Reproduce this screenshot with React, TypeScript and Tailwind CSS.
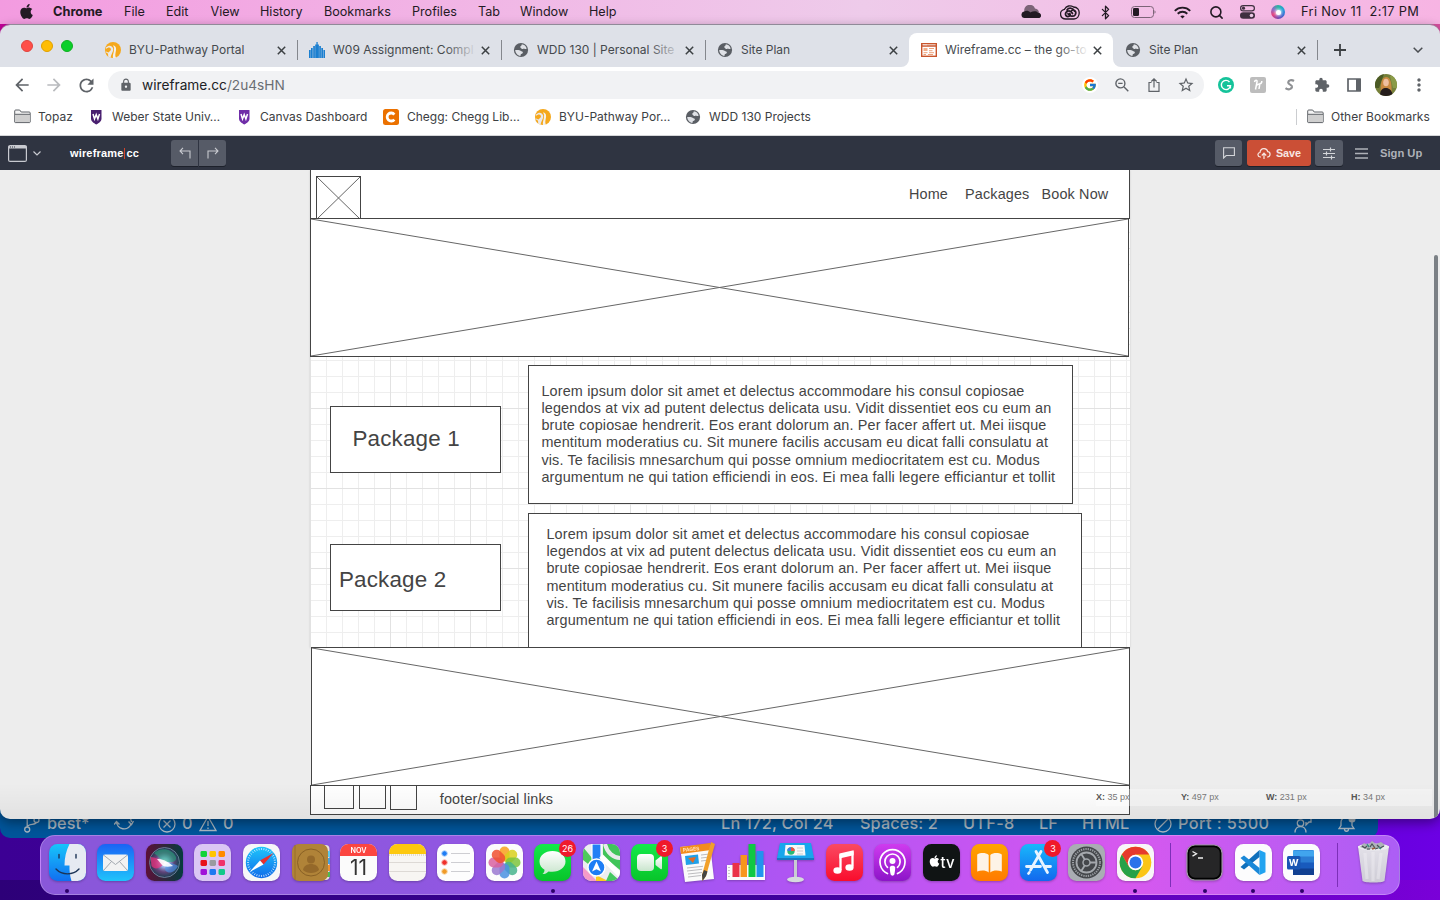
import React from "react";
import { FaApple } from "react-icons/fa";
import { FcGoogle } from "react-icons/fc";
import {
  MdArrowBack,
  MdArrowForward,
  MdRefresh,
  MdLock,
  MdExtension,
  MdStarBorder,
  MdMoreVert,
} from "react-icons/md";
import { Bluetooth, Search } from "lucide-react";

/* ---------- macOS menu bar ---------- */

const menus: [string, string][] = [
  ["File", "w-[42px]"],
  ["Edit", "w-[44.5px]"],
  ["View", "w-[49.5px]"],
  ["History", "w-[64px]"],
  ["Bookmarks", "w-[88px]"],
  ["Profiles", "w-[66px]"],
  ["Tab", "w-[42px]"],
  ["Window", "w-[69px]"],
  ["Help", "w-[40px]"],
];

function MenuBar() {
  return (
    <div className="flex h-6 w-full items-center bg-linear-to-r from-[#f39be0] via-[#eecbea] via-60% to-[#f7b4e3] text-[12.6px] text-[#231a24]">
      <FaApple className="ml-[18px] h-[17px] w-[17px] -translate-y-px" />
      <span className="ml-[18px] w-[71px] text-[12.8px] font-bold">Chrome</span>
      {menus.map(([m, w]) => (
        <span key={m} className={"shrink-0 whitespace-nowrap " + w}>
          {m}
        </span>
      ))}
      <svg className="ml-auto h-[14px] w-5 shrink-0" viewBox="0 0 20 14">
        <path d="M3.500 7a5.500 5.500 0 0 1 10.500-3.500a4.500 4.500 0 0 1 4 4z" fill="#7c6478" />
        <path d="M3.500 13a3.300 3.300 0 0 1-.5-6.500c3-1.500 4.500-.5 6.500.8c3-1.500 6-1.300 7.500.2c4 .5 4 5.500.5 5.500z" fill="#231a24" />
      </svg>
      <svg className="ml-[19px] h-[15px] w-5 shrink-0" viewBox="0 0 20 15" fill="none" stroke="#231a24">
        <path d="M8.500 1A6.700 6.700 0 0 1 13.500 2c8 0 7 12 .5 12H6C-1 14-1 5 4.500 4.300C5.500 2.300 7 1.300 8.500 1z" strokeWidth="1.300" />
        <path d="M12.500 8.500c-1-1.800-2.300-2.700-4-2.500c-4.500 1-3.500 6 0 5.500c1.500-.3 2.300-1.500 1.300-3M7 5c2-3 6-2 7.500 1M8 8.700c2 3 5.500 3.300 7.300 1c1.700-3.500-1.300-5.500-3.600-4.300" strokeWidth="1.700" strokeLinecap="round" />
      </svg>
      <Bluetooth className="ml-[18px] h-[15px] w-[15px] shrink-0" strokeWidth={2.1} />
      <svg className="ml-[18px] h-3 w-[25px] shrink-0" viewBox="0 0 25 12">
        <rect x=".5" y=".5" width="22" height="11" rx="3" fill="none" stroke="#7c6478" />
        <rect x="2" y="2" width="6" height="8" rx="1.200" fill="#231a24" />
        <path d="M23.500 4.300c1.400.5 1.400 2.900 0 3.400z" fill="#7c6478" />
      </svg>
      <svg className="ml-[18px] h-[13px] w-[17px] shrink-0" viewBox="0 0 17 13" fill="none" stroke="#231a24" strokeWidth="1.900">
        <path d="M.8 4.800c4.200-4.200 11.200-4.200 15.400 0M3.700 7.700c2.700-2.600 6.900-2.600 9.600 0" />
        <path d="M6.300 10.300c1.300-1.200 3.100-1.200 4.400 0L8.500 12.500z" fill="#231a24" stroke="none" />
      </svg>
      <Search className="ml-[18px] h-[15px] w-[15px] shrink-0" strokeWidth={2.5} />
      <svg className="ml-[16px] h-[14px] w-[15px] shrink-0" viewBox="0 0 15 14">
        <rect x=".6" y=".6" width="13.800" height="5.300" rx="2.650" fill="none" stroke="#3f3040" strokeWidth="1.200" />
        <circle cx="3.500" cy="3.200" r="1.600" fill="#3f3040" />
        <rect x="0" y="7.300" width="15" height="6.500" rx="3.250" fill="#3f3040" />
        <circle cx="11.500" cy="10.500" r="1.800" fill="#eccbe6" />
      </svg>
      <span className="ml-[16px] flex h-[14px] w-[14px] shrink-0 items-center justify-center rounded-full bg-[conic-gradient(#27b59c,#1f9fd8,#2f66d0,#7a3fb0,#e8407c,#8a6ac8,#27b59c)]">
        <span className="h-[5px] w-[5px] rounded-full bg-white shadow-[0_0_3px_1px_#fffc]" />
      </span>
      <span className="mr-[18px] ml-[16px] w-[121px] shrink-0 text-[12.8px] tracking-[0.35px] whitespace-pre">Fri Nov 11  2:17 PM</span>
    </div>
  );
}

/* ---------- small favicons ---------- */

function Pathway() {
  return (
    <svg className="h-4 w-4 shrink-0" viewBox="0 0 16 16">
      <circle cx="8" cy="8" r="8" fill="#f5a81c" />
      <path d="M1 5.500C4 2.500 7 3.500 8 6c1 3-1.500 5-2.500 10L0 12l1-2.500l2.500 1C5.500 8.500 6.300 8 5.800 6.700C5 5 3 5 1 7z" fill="#e9e8ea" />
      <path d="M.5 10.500c2.500 0 3 2 2.500 4A8 8 0 0 1 .3 10.500z" fill="#f5a81c" />
      <path d="M8.800 3.500c3 1 2.500 4.500 1.800 7c-.4 2-.5 3.500.4 5.500L8 16c-.5-2.500.5-4.500.8-6.500c.4-2.500.6-4-.8-6z" fill="#f4f0ea" />
    </svg>
  );
}

function Bars() {
  return (
    <svg className="h-4 w-4 shrink-0" viewBox="0 0 16 16" fill="#1b7fd0">
      <path d="M0 8h1.700v8H0zM2 6h1.700v10H2zM4.200 4h1.700v12H4.200zM6.200 2.500h1.200V0h1.300v2.500h1.200V16H6.200zM10.200 4h1.700v12h-1.700zM12.300 6H14v10h-1.700zM14.400 8H16v8h-1.600z" />
    </svg>
  );
}

function WireIcon() {
  return (
    <svg className="h-4 w-4 shrink-0" viewBox="0 0 16 16">
      <rect x=".7" y="1.700" width="14.600" height="12.600" fill="#fff" stroke="#c9552c" strokeWidth="1.400" />
      <path d="M1 4h14" stroke="#c9552c" strokeWidth="1.300" />
      <path d="M2.500 2.800h1M4.500 2.800h1" stroke="#fff" />
      <path d="M2.500 6h4v3h-4z" fill="#f2b08c" />
      <path d="M8 6.500h5M8 8.700h3.500M2.500 10.700h4M8 10.700h5M2.500 12.500h2.500M7 12.500h5" stroke="#eda27c" />
    </svg>
  );
}

function Shield({ color }: { color: string }) {
  return (
    <svg className="h-4 w-4 shrink-0" viewBox="0 0 16 16">
      <path d="M3 1h10.500v8.500c0 3-2.500 4.500-5.200 6C5.500 14 3 12.500 3 9.500z" fill={color} />
      <path d="M5 5l1.500 5L8.200 5.500L9.900 10L11.500 5" stroke="#fff" strokeWidth="1.500" fill="none" />
    </svg>
  );
}

function Folder() {
  return (
    <svg className="h-[15px] w-[17px] shrink-0" viewBox="0 0 17 15">
      <path d="M.7 13V2c0-.6.4-1 1-1h4l1.500 2h8c.6 0 1 .4 1 1v9c0 .4-.3.6-.6.6H1.300C1 13.600.7 13.400.7 13z" fill="#f3f3f3" stroke="#5f6368" />
      <path d="M1.200 5.500h14.600v7.600H1.200z" fill="#cfcfcf" />
      <path d="M1 5.300h15" stroke="#5f6368" />
    </svg>
  );
}

function Globe() {
  return (
    <svg className="h-4 w-4 shrink-0" viewBox="0 0 16 16">
      <circle cx="8" cy="8" r="7.100" fill="#5a5e64" />
      <path d="M8.800 2.300c2.500.2 4.300 2 4.900 4.200c-1 .9-2.400.7-3 .1c-.9.900-2.500.6-2.500-.6c-1-.2-1.300-1.200-.6-1.800c.8-.4 1.200-1 1.200-1.900zM2.200 8c2.300 0 4.500-.3 5.700 1c.6.7 1.900.3 2 1.400c0 1.300-1.900 1.200-2.200 2.200c-.2.600.1 1-.4 1.300C4.600 13.600 2.300 11 2.200 8z" fill="#dfe1e6" />
    </svg>
  );
}

/* ---------- Chrome ---------- */

function Cross() {
  return (
    <svg className="h-[9px] w-[9px] shrink-0" viewBox="0 0 9 9">
      <path d="M.8.800l7.400 7.400M8.200.8L.8 8.200" stroke="#3c4043" strokeWidth="1.500" />
    </svg>
  );
}

function Tab({ icon, title, active, divider, fade }: { icon: React.ReactNode; title: string; active?: boolean; divider?: boolean; fade?: boolean }) {
  return (
    <div className={"relative flex h-[34px] w-[204px] shrink-0 items-center rounded-t-lg pl-3 " + (active ? "bg-white" : "")}>
      {active && (
        <>
          <svg className="absolute bottom-0 -left-2 h-2 w-2" viewBox="0 0 8 8"><path d="M8 0v8H0a8 8 0 0 0 8-8z" fill="#fff" /></svg>
          <svg className="absolute -right-2 bottom-0 h-2 w-2" viewBox="0 0 8 8"><path d="M0 0v8h8a8 8 0 0 1-8-8z" fill="#fff" /></svg>
        </>
      )}
      {icon}
      <div className="relative ml-2 w-[144px] text-[12px] whitespace-nowrap text-[#45494d]">
        {title}
        {fade && <span className={"absolute inset-y-0 right-0 w-8 bg-linear-to-r from-transparent " + (active ? "to-white" : "to-[#dee1e8]")} />}
      </div>
      <span className="ml-[4px] flex">
        <Cross />
      </span>
      {divider && <span className="absolute right-[-1px] h-5 w-px bg-[#84878d]" />}
    </div>
  );
}

function TabStrip() {
  return (
    <div className="flex h-[42px] items-end bg-[#dee1e8]">
      <div className="mb-[15px] ml-[21px] flex w-[72px] gap-2">
        <span className="h-3 w-3 rounded-full border border-[#e0443e] bg-[#ff4f48]" />
        <span className="h-3 w-3 rounded-full border border-[#e0a000] bg-[#ffbd05]" />
        <span className="h-3 w-3 rounded-full border border-[#10b020] bg-[#0bcf2a]" />
      </div>
      <Tab icon={<Pathway />} title="BYU-Pathway Portal" divider />
      <Tab icon={<Bars />} title="W09 Assignment: Compl" divider fade />
      <Tab icon={<Globe />} title="WDD 130 | Personal Site" divider fade />
      <Tab icon={<Globe />} title="Site Plan" />
      <Tab icon={<WireIcon />} title="Wireframe.cc – the go-to" active fade />
      <Tab icon={<Globe />} title="Site Plan" divider />
      <svg className="mb-[11px] ml-[17px] h-3 w-3" viewBox="0 0 12 12">
        <path d="M6 0v12M0 6h12" stroke="#3c4043" strokeWidth="1.800" />
      </svg>
      <svg className="mr-[17px] mb-[14px] ml-auto h-[6px] w-[10px]" viewBox="0 0 10 6">
        <path d="M.7.7L5 5L9.300.7" stroke="#4b4e52" strokeWidth="1.500" fill="none" />
      </svg>
    </div>
  );
}

function Toolbar() {
  return (
    <div className="flex h-9 items-center bg-white text-[#5f6368]">
      <MdArrowBack className="ml-[12px] h-[20px] w-[20px]" />
      <MdArrowForward className="ml-[12px] h-[20px] w-[20px] text-[#b9bbbe]" />
      <MdRefresh className="ml-[12px] h-[21px] w-[21px]" />
      <div className="ml-[11px] flex h-7 w-[1096px] items-center rounded-full bg-[#f1f2f4]">
        <MdLock className="ml-[11px] h-[14px] w-[14px]" />
        <span className="ml-[9px] text-[13.7px] text-[#202124]">
          wireframe.cc<span className="text-[#6a6e73]">/2u4sHN</span>
        </span>
        <span className="ml-auto flex h-4 w-4 items-center justify-center rounded-full bg-white">
          <FcGoogle className="h-[14px] w-[14px]" />
        </span>
        <svg className="ml-[17px] h-[14px] w-[14px]" viewBox="0 0 14 14" fill="none" stroke="currentColor" strokeWidth="1.400">
          <circle cx="5.400" cy="5.400" r="4.500" />
          <path d="M8.800 8.800l4.500 4.500M3.200 5.400h4.400" />
        </svg>
        <svg className="ml-[19px] h-[14px] w-[12px]" viewBox="0 0 12 14" fill="none" stroke="currentColor" strokeWidth="1.200">
          <path d="M3.500 4.500H1v8.800h10V4.500H8.500M6 9.500V1M3.300 3.500L6 .9l2.700 2.600" />
        </svg>
        <MdStarBorder className="mr-[9px] ml-[17px] h-[18px] w-[18px]" />
      </div>
      <svg className="ml-[14px] h-4 w-4 shrink-0" viewBox="0 0 16 16">
        <circle cx="8" cy="8" r="8" fill="#15c39a" />
        <path d="M11.500 5A4.600 4.600 0 1 0 12.500 8.800H9M12.400 8.500v3" stroke="#fff" strokeWidth="1.400" fill="none" />
      </svg>
      <svg className="ml-4 h-4 w-4 shrink-0" viewBox="0 0 16 16">
        <rect width="16" height="16" rx="2" fill="#bdbdbd" />
        <path d="M4.500 5C5 2.500 7.500 2.500 7 5L5.500 12.500M6.200 9C8 6.500 10 7 9.500 9L9 12M8.500 6.800c2 .5 3.500-.8 3.300-2.800" stroke="#fff" strokeWidth="1.500" fill="none" />
      </svg>
      <svg className="ml-4 h-4 w-4 shrink-0" viewBox="0 0 16 16">
        <path d="M12 4C9.500 2.300 6.500 3.300 6.200 5.300C6 7.800 10.300 7.500 10 10c-.4 2.500-4 3-6.500 1.200" stroke="#8f9194" strokeWidth="2.200" fill="none" />
      </svg>
      <MdExtension className="ml-4 h-4 w-4 shrink-0" />
      <svg className="ml-[17px] h-[14px] w-[14px] shrink-0" viewBox="0 0 14 14">
        <path d="M1 1h12v12H1z" stroke="#5f6368" strokeWidth="1.700" fill="none" />
        <path d="M9 1h5v12H9z" fill="#5f6368" />
      </svg>
      <svg className="ml-[14px] h-[22px] w-[22px] shrink-0 rounded-full" viewBox="0 0 22 22">
        <rect width="22" height="22" fill="#76803a" />
        <path d="M0 0h9L4 14H0z" fill="#4c5b25" />
        <path d="M15 2h7v12h-4z" fill="#8a9b48" />
        <path d="M6 20C5 12 6 3 11 3s6 7 5.500 17z" fill="#c98a42" />
        <ellipse cx="11" cy="8.500" rx="2.800" ry="3.800" fill="#efc0a0" />
        <path d="M5 22c0-7 3-8 6-8s6 2 7 8z" fill="#251d1c" />
      </svg>
      <MdMoreVert className="ml-[12px] h-5 w-5 shrink-0" />
    </div>
  );
}

function BookmarksBar() {
  return (
    <div className="flex h-[33px] items-center border-b border-[#d5d6d8] bg-white pb-[5px] text-[12px] whitespace-nowrap text-[#3c4043]">
      <span className="ml-[14px] flex w-[74px] items-center gap-[7px]"><Folder />Topaz</span>
      <span className="flex w-[147px] items-center gap-2"><Shield color="#4a2070" />Weber State Univ…</span>
      <span className="flex w-[148px] items-center gap-2 pl-px"><Shield color="#6f2da8" />Canvas Dashboard</span>
      <span className="flex w-[152px] items-center gap-2">
        <svg className="h-4 w-4 shrink-0" viewBox="0 0 16 16">
          <rect width="16" height="16" rx="2.500" fill="#eb7100" />
          <path d="M11.300 5.500A4 4 0 1 0 11.300 10.500" stroke="#fff" strokeWidth="2.800" fill="none" />
        </svg>
        Chegg: Chegg Lib…
      </span>
      <span className="flex w-[150px] items-center gap-2"><Pathway />BYU-Pathway Por…</span>
      <span className="flex items-center gap-2"><Globe />WDD 130 Projects</span>
      <span className="ml-auto h-4 w-px bg-[#cbcdd0]" />
      <span className="mr-[11px] ml-[10px] flex w-[122px] items-center gap-[7px]"><Folder />Other Bookmarks</span>
    </div>
  );
}

/* ---------- wireframe.cc ---------- */

function AppBar() {
  const btn = "flex h-[26px] items-center justify-center bg-[#565b67] shadow-[0_1px_0_#1d212b]";
  return (
    <div className="flex h-[34px] items-center bg-[#2f3441] font-['Liberation_Sans',Arial,sans-serif] text-white">
      <svg className="ml-2 h-[17px] w-[19px]" viewBox="0 0 19 17">
        <rect x=".6" y=".6" width="17.800" height="15.800" rx="1.500" fill="none" stroke="#c8cad0" strokeWidth="1.200" />
        <path d="M.5 1h18v2.500H.5z" fill="#c8cad0" />
        <path d="M2 2h1M4 2h1M6 2h1" stroke="#2f3441" />
      </svg>
      <svg className="ml-[6px] h-[5px] w-2" viewBox="0 0 8 5">
        <path d="M.5.500L4 4L7.500.5" stroke="#c8cad0" strokeWidth="1.200" fill="none" />
      </svg>
      <span className="ml-[29px] flex w-[101px] items-center text-[11px] font-bold tracking-[0.16px]">
        wireframe<span className="mx-px h-[11px] w-px bg-[#d0452c]" />cc
      </span>
      <span className={btn + " w-[27px] rounded-l-[3px]"}>
        <svg className="h-3 w-3" viewBox="0 0 12 12" fill="none" stroke="#c8cad0" strokeWidth="1.100">
          <path d="M4 .8L1 4l3 3.200M1 4h10v7.500" />
        </svg>
      </span>
      <span className={btn + " ml-px w-[27px] rounded-r-[3px]"}>
        <svg className="h-3 w-3" viewBox="0 0 12 12" fill="none" stroke="#c8cad0" strokeWidth="1.100">
          <path d="M8 .8L11 4L8 7.200M11 4H1v7.500" />
        </svg>
      </span>
      <span className={btn + " ml-auto w-[27px] rounded-[3px]"}>
        <svg className="h-3 w-3" viewBox="0 0 12 12" fill="none" stroke="#d4d6da" strokeWidth="1.100">
          <path d="M.6.800h10.800v7.700H3.200L.6 11z" />
        </svg>
      </span>
      <span className="ml-[5px] flex h-[26px] w-16 items-center justify-center gap-[5px] rounded-[3px] bg-[#cb4f36] text-[10.8px] font-bold text-[#f8e6e2] shadow-[0_1px_0_#1d212b]">
        <svg className="h-[11px] w-[14px]" viewBox="0 0 14 11" fill="none" stroke="#f8e6e2" strokeWidth="1.200">
          <path d="M4 9H3.300C.2 8.500.2 4.800 3 4.500C3.500-.5 10-.5 10.700 3.700c3.300.3 3 5 0 5.300H10M7 11V5.500M4.800 7.500L7 5.200l2.200 2.300" />
        </svg>
        Save
      </span>
      <span className={btn + " ml-[4px] w-7 rounded-[3px]"}>
        <svg className="h-[13px] w-3" viewBox="0 0 12 13" fill="none" stroke="#d4d6da" strokeWidth="1.200">
          <path d="M0 2.500h12M0 6.500h12M0 10.500h12M7.500.5v4M3.500 4.500v4M8.500 8.500v4" />
        </svg>
      </span>
      <svg className="ml-[12px] h-[11px] w-[13px]" viewBox="0 0 13 11">
        <path d="M0 1h13M0 5.500h13M0 10h13" stroke="#aeb1b8" strokeWidth="1.300" />
      </svg>
      <span className="mt-px mr-[18px] ml-[12px] w-[42px] text-[11.2px] font-bold whitespace-nowrap text-[#aeb1b8]">Sign Up</span>
    </div>
  );
}

function Crossed({ w, h, className }: { w: number; h: number; className: string }) {
  return (
    <div className={"absolute border border-[#444] bg-white " + className}>
      <svg className="block h-full w-full" viewBox={`0 0 ${w} ${h}`} preserveAspectRatio="none">
        <path d={`M0 0L${w} ${h}M0 ${h}L${w} 0`} stroke="#666" strokeWidth="1" fill="none" />
      </svg>
    </div>
  );
}

const lorem = [
  "Lorem ipsum dolor sit amet et delectus accommodare his consul copiosae",
  "legendos at vix ad putent delectus delicata usu. Vidit dissentiet eos cu eum an",
  "brute copiosae hendrerit. Eos erant dolorum an. Per facer affert ut. Mei iisque",
  "mentitum moderatius cu. Sit munere facilis accusam eu dicat falli consulatu at",
  "vis. Te facilisis mnesarchum qui posse omnium mediocritatem est cu. Modus",
  "argumentum ne qui tation efficiendi in eos. Ei mea falli legere efficiantur et tollit",
];

function Lorem() {
  return (
    <>
      {lorem.map((l) => (
        <div key={l}>{l}</div>
      ))}
    </>
  );
}

function Canvas() {
  const box = "absolute border border-[#444] bg-white ";
  const text = "absolute whitespace-nowrap ";
  return (
    <div className="relative h-[649px] overflow-hidden bg-[#ededed] font-['Liberation_Sans',Arial,sans-serif] text-[14.4px] leading-[17.28px] tracking-[0.16px] text-[#444]">
      <div className="absolute top-0 left-[310px] h-[478px] w-[820px] bg-white bg-[linear-gradient(to_right,#e2e2e2_1px,transparent_1px),linear-gradient(to_bottom,#e2e2e2_1px,transparent_1px),linear-gradient(to_right,#eeeeee_1px,transparent_1px),linear-gradient(to_bottom,#eeeeee_1px,transparent_1px)] bg-[size:80px_80px,80px_80px,16px_16px,16px_16px] bg-[position:0px_0px,0px_-2px,0px_0px,0px_-2px] shadow-[0_0_2px_#0002]" />
      <div className={box + "-top-5 left-[310px] h-[69px] w-[820px]"} />
      <Crossed w={43} h={42} className="top-[6px] left-[316px] h-[44px] w-[45px]" />
      <Crossed w={817} h={137} className="top-[48px] left-[310px] h-[139px] w-[819px]" />
      <span className={text + "top-[16px] left-[909px]"}>Home</span>
      <span className={text + "top-[16px] left-[965px]"}>Packages</span>
      <span className={text + "top-[16px] left-[1041.500px]"}>Book Now</span>

      <div className={box + "top-[236px] left-[330px] h-[67px] w-[171px]"} />
      <span className={text + "top-[256px] left-[352.500px] text-[22.4px] leading-[26.9px]"}>Package 1</span>
      <div className={box + "top-[195px] left-[528px] h-[139px] w-[545px]"} />
      <div className={text + "top-[212.600px] left-[541.400px]"}><Lorem /></div>

      <div className={box + "top-[374px] left-[330px] h-[67px] w-[171px]"} />
      <span className={text + "top-[397px] left-[339px] text-[22.4px] leading-[26.9px]"}>Package 2</span>
      <div className={box + "top-[343px] left-[528px] h-[140px] w-[554px]"} />
      <div className={text + "top-[355.800px] left-[546.400px]"}><Lorem /></div>

      <Crossed w={817} h={137} className="top-[477px] left-[311px] h-[139px] w-[819px]" />
      <div className={box + "top-[615px] left-[310px] h-[30px] w-[820px]"} />
      <div className={box + "top-[615px] left-[324px] h-6 w-[30px]"} />
      <div className={box + "top-[615px] left-[359px] h-6 w-[27px]"} />
      <div className={box + "top-[615px] left-[390px] h-[25px] w-[27px]"} />
      <span className={text + "top-[620.500px] left-[439.800px]"}>footer/social links</span>

      <div className="absolute bottom-0 left-0 h-9 w-full bg-linear-to-b from-transparent to-black/5" />
      <div className="absolute top-[619px] right-[8px] flex h-[17px] w-[336px] items-center bg-white/35 text-[9px] tracking-normal text-[#777]">
        <span className="w-[85px] whitespace-nowrap"><b className="text-[#555]">X:</b> 35 px</span>
        <span className="w-[85px] whitespace-nowrap"><b className="text-[#555]">Y:</b> 497 px</span>
        <span className="w-[85px] whitespace-nowrap"><b className="text-[#555]">W:</b> 231 px</span>
        <span className="whitespace-nowrap"><b className="text-[#555]">H:</b> 34 px</span>
      </div>
      <div className="absolute top-[85px] right-[2px] h-[564px] w-1 rounded-t-full bg-[#7b8085]" />
    </div>
  );
}

/* ---------- editor status bar peeking out below ---------- */

function StatusBar() {
  return (
    <div className="absolute top-[700px] left-0 flex h-[138px] w-[1378px] items-end overflow-hidden rounded-[10px] bg-[#00559a] pb-[5px] text-[16.3px] leading-[20px] font-medium whitespace-nowrap text-[#aab8c3]">
      <svg className="mb-0 ml-6 h-[18px] w-4" viewBox="0 0 16 18" fill="none" stroke="currentColor" strokeWidth="1.300">
        <circle cx="3.200" cy="14.500" r="2.500" /><circle cx="12.500" cy="5" r="2.500" /><path d="M3.200 12V0M3.500 12c0-4 8-1.500 8.700-4.500" />
      </svg>
      <span className="ml-[7px] w-[67px]">best*</span>
      <svg className="mb-[1px] h-[18px] w-5" viewBox="0 0 20 18" fill="none" stroke="currentColor" strokeWidth="1.400">
        <path d="M2.500 7.500a7.500 7.500 0 0 0 14.500 2.500M17.500 8a7.500 7.500 0 0 0-14-3M0 10.500l2.500-3l3 3M14.500 7.500l3 3l2-3.500" />
      </svg>
      <svg className="ml-[24px] h-[18px] w-[18px]" viewBox="0 0 18 18" fill="none" stroke="currentColor" strokeWidth="1.300">
        <circle cx="9" cy="9" r="8" /><path d="M5.500 5.500l7 7M12.500 5.500l-7 7" />
      </svg>
      <span className="ml-[6px] w-[17px]">0</span>
      <svg className="mb-[1px] h-[17px] w-[18px]" viewBox="0 0 18 17" fill="none" stroke="currentColor" strokeWidth="1.300">
        <path d="M9 1.500L17 15.500H1zM9 6v5M9 12.500v1.500" />
      </svg>
      <span className="ml-[6px] w-[498px]">0</span>
      <span className="w-[139px] tracking-[0.25px]">Ln 172, Col 24</span>
      <span className="w-[103px] tracking-[0.1px]">Spaces: 2</span>
      <span className="w-[76px] tracking-[0.3px]">UTF-8</span>
      <span className="w-[43px]">LF</span>
      <span className="w-[72px] tracking-[0.1px]">HTML</span>
      <svg className="h-[18px] w-[18px]" viewBox="0 0 18 18" fill="none" stroke="currentColor" strokeWidth="1.300">
        <circle cx="9" cy="9" r="8" /><path d="M14.500 3.500l-11 11" />
      </svg>
      <span className="ml-[6px] w-[116px] tracking-[0.4px]">Port : 5500</span>
      <svg className="h-[18px] w-[18px]" viewBox="0 0 18 18" fill="none" stroke="currentColor" strokeWidth="1.300">
        <circle cx="6.500" cy="8" r="3.200" /><path d="M1 17.500c0-8 11-8 11 0M10 1h7v6h-2l-3 3V7" />
      </svg>
      <svg className="ml-[26px] h-[18px] w-[18px]" viewBox="0 0 18 18" fill="none" stroke="currentColor" strokeWidth="1.300">
        <path d="M1 13.500l2-3V7c0-6 11-6 11 0v3.500l2 3zM6.500 14c0 3 4 3 4 0" /><circle cx="14" cy="4" r="3.500" fill="currentColor" stroke="none" />
      </svg>
    </div>
  );
}

/* ---------- Dock ---------- */

function Slot({ children, dot, badge }: { children: React.ReactNode; dot?: boolean; badge?: string }) {
  return (
    <div className="relative flex h-[60px] w-[48.55px] shrink-0 justify-center pt-[8px]">
      <svg className="h-[37px] w-[37px] overflow-visible drop-shadow-[0_1px_1px_rgba(0,0,0,0.25)]" viewBox="0 0 37 37">
        {children}
      </svg>
      {badge && (
        <span className="absolute top-[4px] right-[1px] flex h-[17px] w-[17px] items-center justify-center rounded-full bg-[#f0192b] text-[9px] text-white">
          {badge}
        </span>
      )}
      {dot && <span className="absolute bottom-[3px] left-1/2 h-1 w-1 -translate-x-1/2 rounded-full bg-[#2c0068]" />}
    </div>
  );
}

function Tile({ fill }: { fill: string }) {
  return <rect width="37" height="37" rx="8.500" fill={fill} />;
}

function Grad({ id, a, b }: { id: string; a: string; b: string }) {
  return (
    <linearGradient id={id} x1="0" y1="0" x2="0" y2="1">
      <stop offset="0" stopColor={a} />
      <stop offset="1" stopColor={b} />
    </linearGradient>
  );
}

const launchColors = ["#12d33a", "#ffc400", "#ff8a00", "#e8101c", "#9a9aa0", "#f0306a", "#a012d8", "#1e78f0", "#12c98a"];
const petals = ["#f8a01c", "#d8d01c", "#7cc43c", "#46b48c", "#4a90e0", "#9a78d0", "#d860a0", "#f05030"];
const ticks = Array.from({ length: 36 }, (_, i) => i * 10);

function Dock() {
  return (
    <div className="absolute top-[835px] left-10 flex h-[60px] w-[1360px] rounded-[15px] border border-white/25 bg-[linear-gradient(to_right,#8957d9,#8f57e0_28%,#a455f3_48%,#c455f2_68%,#d758ef_80%,#ac5ef5)] pl-[2px]">
      <svg className="absolute h-0 w-0">
        <defs>
          <Grad id="mail" a="#1a63f5" b="#20c4fb" />
          <Grad id="finder" a="#17c5fb" b="#116ff0" />
          <Grad id="green" a="#14ea4a" b="#08c42a" />
          <Grad id="music" a="#fb4a62" b="#f90d2c" />
          <Grad id="pod" a="#cf3bef" b="#8c14c8" />
          <Grad id="books" a="#ffa400" b="#ff7a00" />
          <Grad id="store" a="#19b8fb" b="#1268ee" />
          <Grad id="blue" a="#1ec6fb" b="#106bea" />
          <Grad id="pale" a="#ffffff" b="#c9e5cd" />
          <Grad id="bin" a="#e6e6ea" b="#d0d0d6" />
          <radialGradient id="orb">
            <stop offset="0" stopColor="#fff" />
            <stop offset=".3" stopColor="#a0b4e8" />
            <stop offset=".65" stopColor="#6a4a88" stopOpacity=".8" />
            <stop offset="1" stopColor="#184a5c" stopOpacity=".7" />
          </radialGradient>
          <linearGradient id="siri">
            <stop offset="0" stopColor="#5c1038" />
            <stop offset="1" stopColor="#063c3e" />
          </linearGradient>
          <clipPath id="tile"><rect width="37" height="37" rx="8.500" /></clipPath>
        </defs>
      </svg>

      <Slot dot>
        <g clipPath="url(#tile)">
          <rect width="37" height="37" fill="url(#finder)" />
          <path d="M20.500 0C17 7 15.500 14 15.500 21.500h5c-.2 5 .3 10 2 15.500H37V0z" fill="#e6eaf2" />
        </g>
        <path d="M10 10.500v3.500M27 10.500v3.500M7 25c6 6.500 17 6.500 23 0" stroke="#1c3456" strokeWidth="1.400" strokeLinecap="round" fill="none" />
      </Slot>
      <Slot>
        <Tile fill="url(#mail)" />
        <rect x="6" y="10.500" width="25" height="16.500" rx="2" fill="#f2f2f2" />
        <path d="M6.500 11l12 9.500L30.500 11M6.500 26.500l8-9M30.500 26.500l-8-9" fill="none" stroke="#9aa0a8" strokeWidth=".9" />
      </Slot>
      <Slot>
        <Tile fill="url(#siri)" />
        <circle cx="18.500" cy="18.500" r="15" fill="url(#orb)" stroke="#7a8aa8" strokeWidth=".8" />
        <path d="M8 9c6-6 18-5 22 4c1 6-5 5-12 5z" fill="#1fae7c" opacity=".55" />
        <path d="M4.500 13c5 0 9 2 14 6c-4 6-10 7-13 3z" fill="#f0307c" opacity=".7" />
        <path d="M20 20c5-2 9 0 12 2c-3 6-9 9-13 4z" fill="#4a9af0" opacity=".6" />
        <path d="M11 15c5 0 9 1 16 7c-5 1-9 1-11-1z" fill="#fff" opacity=".9" />
      </Slot>
      <Slot>
        <Tile fill="#dac6f4" />
        {launchColors.map((c, i) => (
          <rect key={c} x={6.5 + (i % 3) * 9} y={7 + Math.floor(i / 3) * 9} width="6.500" height="6" rx="1.400" fill={c} />
        ))}
      </Slot>
      <Slot>
        <Tile fill="#f6f6f8" />
        <circle cx="18.500" cy="18.500" r="15.700" fill="url(#blue)" />
        {ticks.map((t) => (
          <path key={t} d="M18.500 4v2" stroke="#e4f2ff" strokeWidth=".7" transform={`rotate(${t} 18.500 18.500)`} />
        ))}
        <path d="M30.500 9L20.500 20.500L17 16.500z" fill="#e8302c" />
        <path d="M6.500 28L20.500 20.500L17 16.500z" fill="#fff" />
      </Slot>
      <Slot>
        <rect x="3" y="1" width="34.500" height="35" rx="4" fill="#e8e4dc" />
        <path d="M35 7h3v6h-3z" fill="#5ac8f0" /><path d="M35 14h3v6h-3z" fill="#4aa0d8" /><path d="M35 21h3v6h-3z" fill="#f09030" /><path d="M35 28h3v5h-3z" fill="#50b850" />
        <rect x="0" y="0" width="36" height="37" rx="7" fill="#b08338" />
        <path d="M3 1v35" stroke="#94692a" strokeWidth=".8" />
        <circle cx="19" cy="18.500" r="13.500" fill="none" stroke="#845c22" strokeWidth=".9" />
        <circle cx="19" cy="15.500" r="4" fill="#95692a" /><path d="M11 26c1-8 15-8 16 0c-4 4-12 4-16 0z" fill="#95692a" />
      </Slot>
      <Slot>
        <g clipPath="url(#tile)"><rect width="37" height="37" fill="#fbfbfb" /><rect width="37" height="12" fill="#fb4640" /></g>
        <text x="18.500" y="9.300" textAnchor="middle" fontSize="7.200" fontWeight="600" fill="#fff">NOV</text>
        <text x="18.500" y="30.500" textAnchor="middle" fontSize="21" fill="#333">11</text>
      </Slot>
      <Slot>
        <g clipPath="url(#tile)"><rect width="37" height="37" fill="#f7f5f2" /><rect width="37" height="10" fill="#fdc80e" /></g>
        <path d="M0 11h37" stroke="#c8b890" strokeDasharray="1 1" strokeWidth=".8" /><path d="M0 18.500h37M0 27.500h37" stroke="#d5d2cd" strokeWidth=".8" />
      </Slot>
      <Slot>
        <Tile fill="#fdfdfd" />
        <circle cx="7.500" cy="9.500" r="2.800" fill="#1e7df5" stroke="#b8d6fa" /><circle cx="7.500" cy="18.500" r="2.800" fill="#f0302a" stroke="#fac0bc" /><circle cx="7.500" cy="27.500" r="2.800" fill="#f09a28" stroke="#fadcb0" />
        <path d="M14 9.500h19M14 18.500h19M14 27.500h19" stroke="#c2c2c6" strokeWidth=".8" />
      </Slot>
      <Slot>
        <Tile fill="#fcfcfc" />
        {petals.map((c, i) => (
          <rect key={c} x="13.500" y="2.500" width="10" height="15" rx="5" fill={c} opacity=".85" transform={`rotate(${i * 45} 18.500 18.500)`} />
        ))}
      </Slot>
      <Slot dot badge="26">
        <Tile fill="url(#green)" />
        <path d="M18.500 7C11 7 5.500 11.500 5.500 17.500c0 4 2.200 6.500 5 8.200c0 2-.8 3.300-2 4.300c2.500 0 4.500-1 6-2.600c9.500 1.600 17-3 17-9.900C31.500 11.500 26 7 18.500 7z" fill="url(#pale)" />
      </Slot>
      <Slot>
        <g clipPath="url(#tile)">
          <rect width="37" height="37" fill="#eceef0" />
          <path d="M0 3l9 11v9L0 16z" fill="#4ecb5c" /><path d="M20 0h17v26L20 12z" fill="#40c45a" /><path d="M22 0c2 9 9 14 15 14" stroke="#e8eaec" strokeWidth="4" fill="none" />
          <path d="M9 0h9v22H9z" fill="#2380f5" stroke="#fff" strokeWidth="1.200" /><path d="M0 23l14 14H0z" fill="#f59bc8" /><path d="M13 31l12 6H13z" fill="#fbcb22" />
          <path d="M18 12l19 19" stroke="#fff" strokeWidth="5" /><path d="M27 28l10 9H23z" fill="#44c860" />
        </g>
        <circle cx="13.500" cy="23.500" r="8.500" fill="#1c7df5" stroke="#fff" strokeWidth="1.400" />
        <path d="M13.500 17.500l4.500 10l-4.500-2.300L9 27.500z" fill="#fff" />
      </Slot>
      <Slot badge="3">
        <Tile fill="url(#green)" />
        <rect x="6" y="10" width="17" height="17" rx="4" fill="url(#pale)" />
        <path d="M24.500 16.500l5-4c1-.6 1.500-.3 1.500.7v11c0 1-.5 1.300-1.500.7l-5-4z" fill="url(#pale)" />
      </Slot>
      <Slot>
        <path d="M0 3L30 0l4 35L5 38z" fill="#fafafa" /><path d="M0 3L30-1l1 7L1 10z" fill="#f28c1c" />
        <text x="3" y="7.800" fontSize="5" fontWeight="700" fill="#ffe1b8" transform="rotate(-6 3 7)">PAGES</text>
        <path d="M5 12l13-1.500l1 9L6 21z" fill="#1fa0e8" /><path d="M8 14l8-1l-3 6z" fill="#e06a28" />
        <path d="M21 11l7-.8M21 14l7-.8M21 17l5-.6M7 24l16-1.700M7 27l15-1.700M8 30l14-1.500M8 33l13-1.500" stroke="#b4b4b8" strokeWidth=".9" />
        <path d="M31-2l4 2l-9 32l-3.500 5l-.5-6z" fill="#f2a02a" /><path d="M24 26l3.500 1.500l-1.500 4.500l-3.500 5l-.5-6z" fill="#444" />
      </Slot>
      <Slot>
        <path d="M-1 21h38v15H-1z" fill="#fafafa" /><path d="M1 23v12" stroke="#999" strokeDasharray="1 2" />
        <path d="M4.500 19h7v14h-7z" fill="#ea3248" /><path d="M12.500 11h6.500v22h-6.500z" fill="#f8961c" /><path d="M20.500 0h7v33h-7z" fill="#10c844" /><path d="M28.500 7h7v26h-7z" fill="#2294ee" />
      </Slot>
      <Slot>
        <path d="M17 15h3v20h-3z" fill="#c8ccd2" /><ellipse cx="18.500" cy="35.500" rx="8.500" ry="2.800" fill="#d6d9de" />
        <path d="M3-1h31l3 15H0z" fill="#18a6ec" /><path d="M0 14h37v2H0z" fill="#1678c0" />
        <path d="M8.500 1h19l1 10.500h-21z" fill="#f8f8f8" /><circle cx="14" cy="7" r="3.700" fill="#28b874" /><path d="M14 7V3.300A3.700 3.700 0 0 1 17.700 7z" fill="#f05040" /><path d="M14 7h-3.700A3.700 3.700 0 0 1 14 3.300z" fill="#3c80e8" /><path d="M20 4h6M20 7h6M20 10h6" stroke="#ccc" />
      </Slot>
      <Slot>
        <Tile fill="url(#music)" />
        <path d="M14.500 26V11.500l12-2.700V22.500" stroke="#fff" strokeWidth="2.300" fill="none" /><path d="M13.400 9.500L27.600 6.300v5L13.400 14.500z" fill="#fff" />
        <ellipse cx="11.500" cy="26.500" rx="4.100" ry="3.300" fill="#fff" /><ellipse cx="23.500" cy="23.500" rx="4.100" ry="3.300" fill="#fff" />
      </Slot>
      <Slot>
        <Tile fill="url(#pod)" />
        <path d="M13.500 29.500a12.500 12.500 0 1 1 10 0M13.500 23.300a7.600 7.600 0 1 1 10 0" stroke="#fff" strokeWidth="1.700" strokeLinecap="round" fill="none" />
        <circle cx="18.500" cy="17" r="3" fill="#fff" />
        <path d="M15.800 23.500c0-2.500 5.400-2.500 5.400 0c0 2.500-.4 5-.9 7c-.5 1.500-3.100 1.500-3.600 0c-.5-2-.9-4.500-.9-7z" fill="#fff" />
      </Slot>
      <Slot>
        <Tile fill="#101414" />
        <FaApple x="5" y="10.500" size={13} color="#fff" />
        <text x="17.500" y="24" fontSize="15" fontWeight="500" fill="#fff">tv</text>
      </Slot>
      <Slot>
        <Tile fill="url(#books)" />
        <path d="M17.700 11c-3-2.500-8-2.500-11.500-.5v17c4-1.500 8.500-1.500 11.500 1zM19.300 11c3-2.500 8-2.500 11.500-.5v17c-4-1.500-8.500-1.500-11.500 1z" fill="#fdf3e6" />
      </Slot>
      <Slot badge="3">
        <Tile fill="url(#store)" />
        <path d="M21 7.500L10.500 26M16 7.500L27.500 28.500M6.500 22.500h14M25.500 22.500h5M9.300 28.500l-.8 1" stroke="#e8f4ff" strokeWidth="2.800" strokeLinecap="round" />
      </Slot>
      <Slot>
        <Tile fill="#a9adb3" />
        <circle cx="18.500" cy="18.500" r="16" fill="#44474b" />
        <circle cx="18.500" cy="18.500" r="13.500" fill="none" stroke="#9a9ea3" strokeWidth="2" strokeDasharray="1.300 1" />
        <circle cx="18.500" cy="18.500" r="10" fill="none" stroke="#a4a8ad" strokeWidth="1.800" />
        <circle cx="18.500" cy="18.500" r="3.500" fill="none" stroke="#a4a8ad" strokeWidth="1.500" />
        <path d="M22 18.500h7M16.700 15.500L13 9.500M16.700 21.500L13 27.500" stroke="#a4a8ad" strokeWidth="1.800" />
      </Slot>
      <Slot dot>
        <Tile fill="#f8f6f8" />
        <circle cx="18.500" cy="18.500" r="15.800" fill="#fbc516" />
        <path d="M4.800 10.600A15.800 15.800 0 0 1 32.200 10.600H18.500L11.700 22.500z" fill="#e63a2c" />
        <path d="M4.800 10.600A15.800 15.800 0 0 0 18.500 34.300L25.300 22.400L18.500 26.400L11.700 22.500z" fill="#26a148" />
        <circle cx="18.500" cy="18.500" r="7.700" fill="#fff" /><circle cx="18.500" cy="18.500" r="6" fill="#2a72ea" />
      </Slot>
      <div className="mt-[7px] flex w-[21px] shrink-0 justify-center"><span className="h-[44px] w-px bg-[#7d2fb8]" /></div>
      <Slot dot>
        <rect x="1" y="1" width="35" height="35" rx="8" fill="#1f1f20" stroke="#a0a0a4" strokeWidth="1.200" />
        <rect x="2.500" y="2.500" width="32" height="32" rx="6.500" fill="#262627" stroke="#000" strokeWidth="1.500" />
        <path d="M6.500 7.500l4 2.300l-4 2.300M12 14h5" stroke="#f0f0f0" strokeWidth="1.300" fill="none" />
      </Slot>
      <Slot dot>
        <Tile fill="#fcfcfd" />
        <path d="M24.500 6l6 2.800v19.400l-6 2.800z" fill="#22a3f0" />
        <path d="M24.500 6v7L9 25.500L5.500 23z" fill="#1070bc" /><path d="M24.500 31v-7L9 11.500L5.500 14z" fill="#1a88d8" />
      </Slot>
      <Slot dot>
        <Tile fill="#fcfcfd" />
        <rect x="10" y="6" width="21" height="25" rx="1.500" fill="#2b7cd3" /><path d="M10 6.500h21V12.500H10z" fill="#41a5ee" /><path d="M10 18.500h21v6.500H10z" fill="#185abd" /><path d="M10 24.500h21V31H10z" fill="#103f91" />
        <rect x="4" y="12" width="13.500" height="13.500" rx="1.500" fill="#1856b4" />
        <text x="10.700" y="22.400" textAnchor="middle" fontSize="9.500" fontWeight="700" fill="#fff">W</text>
      </Slot>
      <div className="mt-[7px] flex w-[23px] shrink-0 justify-center"><span className="h-[44px] w-px bg-[#7d2fb8]" /></div>
      <Slot>
        <path d="M3 2L7.500 37c3 2 19 2 22 0L34 2z" fill="url(#bin)" opacity=".97" />
        <path d="M10 9l2 26M26 9l-3 26M18 8v29" stroke="#f3f3f6" strokeWidth="3" opacity=".4" />
        <ellipse cx="18.500" cy="3" rx="15.500" ry="3.500" fill="#eceef0" />
        <path d="M5 3l4-4l4 2l4-4l4 3l5-2l4 3l-5 4l-6-1l-6 2z" fill="#aeb4b8" />
        <path d="M7 2l3 2l2-2M15 3l2-3l3 4M22 1l3 3l4-2M12 5h3M20 5l3-1" stroke="#4a5056" strokeWidth="1.200" fill="none" />
        <path d="M12 0l2 3M24 3l2 2" stroke="#3f8f86" strokeWidth="1.500" /><path d="M17 5l3-1" stroke="#9a5a3a" strokeWidth="1.500" />
      </Slot>
    </div>
  );
}

export default function App() {
  return (
    <div className="relative h-[900px] w-[1440px] overflow-hidden bg-linear-to-r from-[#3c0094] via-[#4300a0] via-50% to-[#6c00e4] font-[Inter,sans-serif]">
      <div className="absolute top-[24px] left-0 h-8 w-full bg-linear-to-r from-[#c4009a] to-[#d8509f]" />
      <div className="absolute bottom-0 left-0 h-[20px] w-full bg-linear-to-r from-[#2d0078] via-[#3a0098] via-50% to-[#7a00d8]" />
      <MenuBar />
      <StatusBar />
      <div className="absolute top-[24px] left-0 w-full overflow-hidden rounded-[10px] border-t border-[#908a98] shadow-[0_4px_12px_rgba(0,0,0,0.4)]">
        <TabStrip />
        <Toolbar />
        <BookmarksBar />
        <AppBar />
        <Canvas />
      </div>
      <Dock />
    </div>
  );
}
